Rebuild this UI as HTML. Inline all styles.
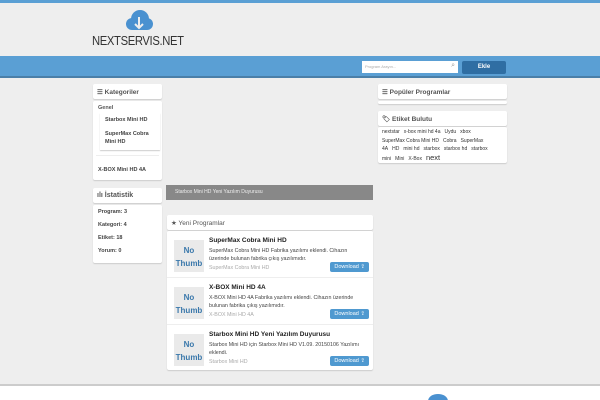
<!DOCTYPE html><html><head><meta charset="utf-8"><style>
*{margin:0;padding:0;box-sizing:border-box}
html,body{width:600px;height:400px;overflow:hidden}
body{background:#eee;font-family:"Liberation Sans",sans-serif;position:relative;font-size:6px;color:#444}
.a{position:absolute}
.box{background:#fff;box-shadow:0 1px 1px #ccc;border-radius:2px}
.h{font-weight:bold;font-size:6.5px;color:#555;padding:4px 4px}
.b{font-weight:bold;font-size:5.5px;color:#444}
.nt{width:30px;height:32px;background:#eaeaea;color:#3a78ab;font-weight:bold;font-size:8px;text-align:center;line-height:13px;padding-top:4px}
.dl{background:#4f99d0;color:#fff;font-size:5.5px;padding:2px 4px;border-radius:2px}
.it{position:absolute;left:0;width:207px;height:47px;border-bottom:1px solid #eee}
.it .nt{position:absolute;left:7px;top:9px}
.it .t{position:absolute;left:42px;top:6px;font-weight:bold;font-size:6.5px;color:#222}
.it .d{position:absolute;left:42px;top:16px;width:160px;font-size:5.3px;line-height:8px;color:#444}
.it .c{position:absolute;left:42px;top:34px;font-size:5.3px;color:#aaa}
.it .dl{position:absolute;right:5px;top:31px}
.tag{font-size:5px;line-height:8.5px;color:#333;white-space:nowrap}
.tag span{margin-right:4px}
</style></head><body>
<div class="a" style="left:0;top:0;width:600px;height:3px;background:#5a9fd4"></div>
<svg class="a" style="left:122px;top:9px" width="34" height="24" viewBox="0 0 34 24"><circle cx="10" cy="15" r="6" fill="#4a91d0"/><circle cx="18" cy="10" r="9" fill="#4a91d0"/><circle cx="25" cy="15" r="6" fill="#4a91d0"/><rect x="10" y="14" width="15" height="7" fill="#4a91d0"/><path d="M17 8v11M13 15l4 4 4-4" stroke="#eee" stroke-width="2" fill="none"/></svg>
<div class="a" style="left:92px;top:34px;font-size:12.5px;color:#333;letter-spacing:-0.4px;transform:scaleX(0.9);transform-origin:left">NEXTSERVIS.NET</div>
<div class="a" style="left:0;top:56px;width:600px;height:22px;background:#5a9fd4;border-bottom:2px solid #4a7fa8"></div>
<div class="a" style="left:362px;top:61px;width:96px;height:12px;background:#fff;font-size:4px;color:#aaa;padding:3px 3px">Program Arayın...<span style="position:absolute;right:3px;top:1px;font-size:7px;color:#999">⌕</span></div>
<div class="a" style="left:462px;top:61px;width:44px;height:13px;background:#2f6ea3;color:#fff;font-weight:bold;font-size:6px;text-align:center;line-height:13px;border-radius:2px">Ekle</div>

<div class="a box h" style="left:93px;top:84px;width:69px;height:15px">☰ Kategoriler</div>
<div class="a box" style="left:93px;top:101px;width:69px;height:79px">
<div class="b a" style="left:5px;top:4px;color:#555">Genel</div>
<div class="a" style="left:7px;top:12px;width:60px;height:37px;box-shadow:0 1px 1px #ccc"></div>
<div class="b a" style="left:12px;top:16px">Starbox Mini HD</div>
<div class="b a" style="left:12px;top:29px;line-height:8px">SuperMax Cobra<br>Mini HD</div>
<div class="a" style="left:3px;top:54px;width:63px;border-top:1px solid #eee"></div>
<div class="b a" style="left:5px;top:66px">X-BOX Mini HD 4A</div>
</div>
<div class="a box h" style="left:93px;top:188px;width:69px;height:15px;font-size:7px">ılı İstatistik</div>
<div class="a box" style="left:93px;top:205px;width:69px;height:58px">
<div class="b a" style="left:5px;top:4px">Program: 3</div>
<div class="b a" style="left:5px;top:17px">Kategori: 4</div>
<div class="b a" style="left:5px;top:30px">Etiket: 18</div>
<div class="b a" style="left:5px;top:43px">Yorum: 0</div>
</div>

<div class="a" style="left:166px;top:185px;width:207px;height:15px;background:#888;color:#eee;font-size:5px;padding:4px 9px">Starbox Mini HD Yeni Yazılım Duyurusu</div>
<div class="a box h" style="left:167px;top:215px;width:206px;height:15px;font-weight:normal">★ Yeni Programlar</div>
<div class="a box" style="left:167px;top:231px;width:206px;height:139px;overflow:hidden">
<div class="it" style="top:0"><div class="nt">No<br>Thumb</div><div class="t">SuperMax Cobra Mini HD</div><div class="d">SuperMax Cobra Mini HD Fabrika yazılımı eklendi. Cihazın üzerinde bulunan fabrika çıkış yazılımıdır.</div><div class="c">SuperMax Cobra Mini HD</div><div class="dl">Download ⇪</div></div>
<div class="it" style="top:47px"><div class="nt">No<br>Thumb</div><div class="t">X-BOX Mini HD 4A</div><div class="d">X-BOX Mini HD 4A Fabrika yazılımı eklendi. Cihazın üzerinde bulunan fabrika çıkış yazılımıdır.</div><div class="c">X-BOX Mini HD 4A</div><div class="dl">Download ⇪</div></div>
<div class="it" style="top:94px;border:0"><div class="nt">No<br>Thumb</div><div class="t">Starbox Mini HD Yeni Yazılım Duyurusu</div><div class="d">Starbox Mini HD için Starbox Mini HD V1.09. 20150106 Yazılımı eklendi.</div><div class="c">Starbox Mini HD</div><div class="dl">Download ⇪</div></div>
</div>

<div class="a box h" style="left:378px;top:84px;width:129px;height:15px">☰ Popüler Programlar</div>
<div class="a box" style="left:378px;top:101px;width:129px;height:3px"></div>
<div class="a box h" style="left:378px;top:111px;width:129px;height:15px">🏷 Etiket Bulutu</div>
<div class="a box tag" style="left:378px;top:127px;width:129px;height:36px;padding:1px 4px">
<div><span>nextstar</span><span>x-box mini hd 4a</span><span>Uydu</span><span>xbox</span></div>
<div><span>SuperMax Cobra Mini HD</span><span>Cobra</span><span>SuperMax</span></div>
<div><span>4A</span><span>HD</span><span>mini hd</span><span>starbox</span><span>starbox hd</span><span>starbox</span></div>
<div><span>mini</span><span>Mini</span><span>X-Box</span><span style="font-size:7.5px">next</span></div>
</div>

<div class="a" style="left:0;top:384px;width:600px;height:16px;background:#fff;border-top:2px solid #ccc"></div>
<div class="a" style="left:428px;top:394px;width:20px;height:14px;border-radius:50%;background:#4a91d0"></div>
</body></html>
